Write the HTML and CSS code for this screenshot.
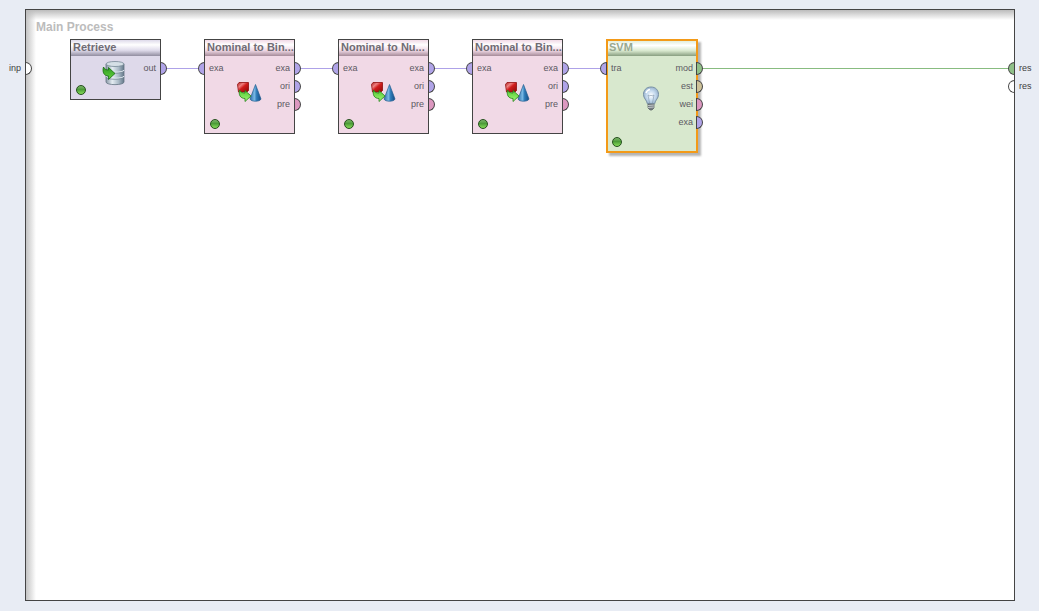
FILE: index.html
```
<!DOCTYPE html>
<html lang="en">
<head>
<meta charset="utf-8">
<title>Main Process</title>
<link rel="stylesheet" href="styles.css">
</head>
<body>
<svg class="defs" width="0" height="0" aria-hidden="true">
  <defs>
    <linearGradient id="metal"><stop offset="0" stop-color="#8797a5"/><stop offset=".35" stop-color="#e4ecf2"/><stop offset=".7" stop-color="#a9b9c6"/><stop offset="1" stop-color="#647889"/></linearGradient>
    <linearGradient id="arrow" x2="0" y2="1"><stop offset="0" stop-color="#2f9a22"/><stop offset="1" stop-color="#62d33c"/></linearGradient>
    <linearGradient id="lime" x2="0" y2="1"><stop offset="0" stop-color="#4fc832"/><stop offset="1" stop-color="#a4f878"/></linearGradient>
    <linearGradient id="red" x2="1" y2="1"><stop offset="0" stop-color="#a81818"/><stop offset=".3" stop-color="#ee8080"/><stop offset=".5" stop-color="#d01c1c"/><stop offset="1" stop-color="#8c0808"/></linearGradient>
    <linearGradient id="cone"><stop offset="0" stop-color="#2e6ea8"/><stop offset=".4" stop-color="#78b8e4"/><stop offset=".6" stop-color="#2f7cb8"/><stop offset="1" stop-color="#144c84"/></linearGradient>
    <radialGradient id="glass"><stop offset="0" stop-color="#ffffff"/><stop offset=".55" stop-color="#c8dcf0"/><stop offset="1" stop-color="#9cb6d0"/></radialGradient>
    <symbol id="database" viewBox="0 0 24 26">
      <path d="M4 3v18c0 3.500 18 3.500 18 0V3z" fill="url(#metal)" stroke="#647584" stroke-width=".8"/>
      <path d="M4 9c0 3 18 3 18 0M4 15c0 3 18 3 18 0" fill="none" stroke="#e8f0f5"/>
      <path d="M4 10c0 3 18 3 18 0M4 16c0 3 18 3 18 0" fill="none" stroke="#768895" stroke-width=".8"/>
      <ellipse cx="13" cy="3" rx="9" ry="2.500" fill="#d5dfe6" stroke="#768895" stroke-width=".8"/>
      <path d="M1.500 6c1 2 2.500 3 5 3V6.500l6.500 6-6.500 6V15C2 15 0 11 1.500 6z" fill="url(#arrow)" stroke="#176c12" stroke-width=".8"/>
    </symbol>
    <symbol id="convert" viewBox="0 0 26 22">
      <path d="M1.500 3.500L3 1.500h9.500v8L11 11H2.500z" fill="url(#red)" stroke="#900c0c" stroke-width=".8"/>
      <path d="M19.500 3.500L25 18c-1 3-10 3-11 0z" fill="url(#cone)" stroke="#245f91" stroke-width=".7"/>
      <path d="M3.500 9c1 2 2.500 3 5.500 3V9.500l6 5.500-6 5.500v-3c-5 0-6.500-4-5.500-8.500z" fill="url(#lime)" stroke="#228018" stroke-width=".8"/>
    </symbol>
    <symbol id="bulb" viewBox="0 0 18 26">
      <path d="M9 1C4 1 1.500 4.500 1.500 8.500c0 4 3 5 4 9.500h7c1-4.500 4-5.500 4-9.500C16.500 4.500 14 1 9 1z" fill="url(#glass)" stroke="#7890a4"/>
      <path d="M7.500 17L6 9l2 1 1-1 1 1 2-1-1.500 8" fill="none" stroke="#7f96aa" stroke-width=".6"/>
      <path d="M4 7c.5-2 2-3 4-3.500" fill="none" stroke="#fff" stroke-width="1.500"/>
      <path d="M6 18h6v4l-2 2H8l-2-2z" fill="#777d82" stroke="#555b60" stroke-width=".7"/>
      <path d="M6 19.500l6-.5M6 21.500l6-.5" stroke="#d5dce0" stroke-width=".8"/>
    </symbol>
  </defs>
</svg>

<main class="process">
  <h1 class="process-title">Main Process</h1>

  <span class="wire wire-1"></span>
  <span class="wire wire-2"></span>
  <span class="wire wire-3"></span>
  <span class="wire wire-4"></span>
  <span class="wire wire-result"></span>

  <ul class="outer-ports outer-inputs">
    <li class="port port-out open">inp</li>
  </ul>

  <section class="node retrieve">
    <h2 class="node-title">Retrieve</h2>
    <div class="ports">
      <ul></ul>
      <ul class="outputs"><li class="port port-out data">out</li></ul>
    </div>
    <svg class="icon icon-database" aria-hidden="true"><use href="#database"/></svg>
    <span class="status"></span>
  </section>

  <section class="node convert first">
    <h2 class="node-title">Nominal to Bin...</h2>
    <div class="ports">
      <ul><li class="port port-in data">exa</li></ul>
      <ul class="outputs"><li class="port port-out data">exa</li><li class="port port-out data">ori</li><li class="port port-out pre">pre</li></ul>
    </div>
    <svg class="icon icon-convert" aria-hidden="true"><use href="#convert"/></svg>
    <span class="status"></span>
  </section>

  <section class="node convert second">
    <h2 class="node-title">Nominal to Nu...</h2>
    <div class="ports">
      <ul><li class="port port-in data">exa</li></ul>
      <ul class="outputs"><li class="port port-out data">exa</li><li class="port port-out data">ori</li><li class="port port-out pre">pre</li></ul>
    </div>
    <svg class="icon icon-convert" aria-hidden="true"><use href="#convert"/></svg>
    <span class="status"></span>
  </section>

  <section class="node convert third">
    <h2 class="node-title">Nominal to Bin...</h2>
    <div class="ports">
      <ul><li class="port port-in data">exa</li></ul>
      <ul class="outputs"><li class="port port-out data">exa</li><li class="port port-out data">ori</li><li class="port port-out pre">pre</li></ul>
    </div>
    <svg class="icon icon-convert" aria-hidden="true"><use href="#convert"/></svg>
    <span class="status"></span>
  </section>

  <section class="node svm">
    <h2 class="node-title">SVM</h2>
    <div class="ports">
      <ul><li class="port port-in data">tra</li></ul>
      <ul class="outputs"><li class="port port-out model">mod</li><li class="port port-out estimate">est</li><li class="port port-out pre">wei</li><li class="port port-out data">exa</li></ul>
    </div>
    <svg class="icon icon-bulb" aria-hidden="true"><use href="#bulb"/></svg>
    <span class="status"></span>
  </section>

  <ul class="outer-ports outer-results">
    <li class="port port-in model">res</li>
    <li class="port port-in open">res</li>
  </ul>
</main>
</body>
</html>
```
FILE: styles.css
```
*, *::after { box-sizing: border-box; }

body {
  display: flex;
  min-height: 100vh;
  margin: 0;
  padding: 9px 24px 10px 25px;
  background: #e8ecf4;
  font-family: "Liberation Sans", Arial, sans-serif;
}

.defs { position: absolute; }

.process {
  position: relative;
  flex: 1;
  border: 1px solid #444;
  background:
    linear-gradient(to bottom, #bcbcbc, rgba(255, 255, 255, 0)) top / 100% 10px no-repeat,
    linear-gradient(to right, #c4c4c4, rgba(255, 255, 255, 0)) left / 10px 100% no-repeat,
    #fff;
}

.process-title {
  margin: 10px;
  color: #bcbcbc;
  font-size: 12px;
  line-height: 14px;
}

ul { margin: 0; padding: 0; list-style: none; }

.node {
  position: absolute;
  top: 29px;
  width: 91px;
  border: 1px solid #444;
}

.node-title {
  height: 16px;
  margin: 0;
  padding-left: 2px;
  overflow: hidden;
  color: #706c74;
  font-size: 11px;
  line-height: 15px;
  white-space: nowrap;
}

.ports {
  display: flex;
  justify-content: space-between;
  padding: 3px 4px 0;
}

.outputs { text-align: right; }

.port {
  position: relative;
  height: 18px;
  color: #5c5862;
  font-size: 9px;
  line-height: 18px;
}

.port::after {
  content: "";
  position: absolute;
  top: 3px;
  width: 7px;
  height: 13px;
  border: 1px solid #444;
}

.port-out::after { right: -11px; border-radius: 0 7px 7px 0; }
.port-in::after { left: -11px; border-radius: 7px 0 0 7px; }

.data::after { background: #b0a4e8; }
.pre::after { background: #dc98c0; }
.model::after { background: #90c088; }
.estimate::after { background: #cec298; }
.open::after { background: #fff; }

.retrieve { left: 44px; height: 61px; background: #ded9ea; }
.retrieve .node-title { background: linear-gradient(#dedaea, #fff 30%, #dedaea 65%, #918da0); }

.convert { height: 95px; background: #f1d9e6; }
.convert .node-title { background: linear-gradient(#f1d9e6, #fff 30%, #f1d9e6 65%, #a58b99); }
.first { left: 178px; }
.second { left: 312px; }
.third { left: 446px; }

.svm {
  left: 580px;
  width: 92px;
  height: 114px;
  border: 2px solid #f39a18;
  background: #d8e8ce;
  box-shadow: 3px 3px 2px #b4b4b4;
}
.svm .node-title {
  height: 15px;
  padding-left: 1px;
  background: linear-gradient(#e2eedc, #fff 30%, #d8e8ce 65%, #889e80);
  color: #98a890;
  line-height: 13px;
}
.svm .ports { padding: 3px 3px 0; }
.svm .port-out::after { right: -10px; }

.icon { position: absolute; }
.icon-database { top: 21px; left: 31px; width: 24px; height: 26px; }
.icon-convert { top: 41px; left: 31px; width: 26px; height: 22px; }
.icon-bulb { top: 45px; left: 34px; width: 18px; height: 26px; }

.status {
  position: absolute;
  bottom: 4px;
  left: 5px;
  width: 10px;
  height: 10px;
  border: 1px solid #24501c;
  border-radius: 50%;
  background: linear-gradient(#8cbc7c, #4c9c38 45%, #92ec60);
  background-origin: border-box;
}
.svm .status { left: 4px; }

.wire {
  position: absolute;
  top: 58px;
  width: 37px;
  height: 1px;
  background: #aea2e8;
}
.wire-1 { left: 135px; }
.wire-2 { left: 269px; }
.wire-3 { left: 403px; }
.wire-4 { left: 537px; }
.wire-result { right: 0; left: 672px; width: auto; background: #88bc80; }

.outer-ports { position: absolute; }
.outer-ports .port { color: #404040; }
.outer-inputs { top: 49px; right: 100%; padding-right: 5px; }
.outer-results { top: 49px; left: 100%; padding-left: 5px; }
```
